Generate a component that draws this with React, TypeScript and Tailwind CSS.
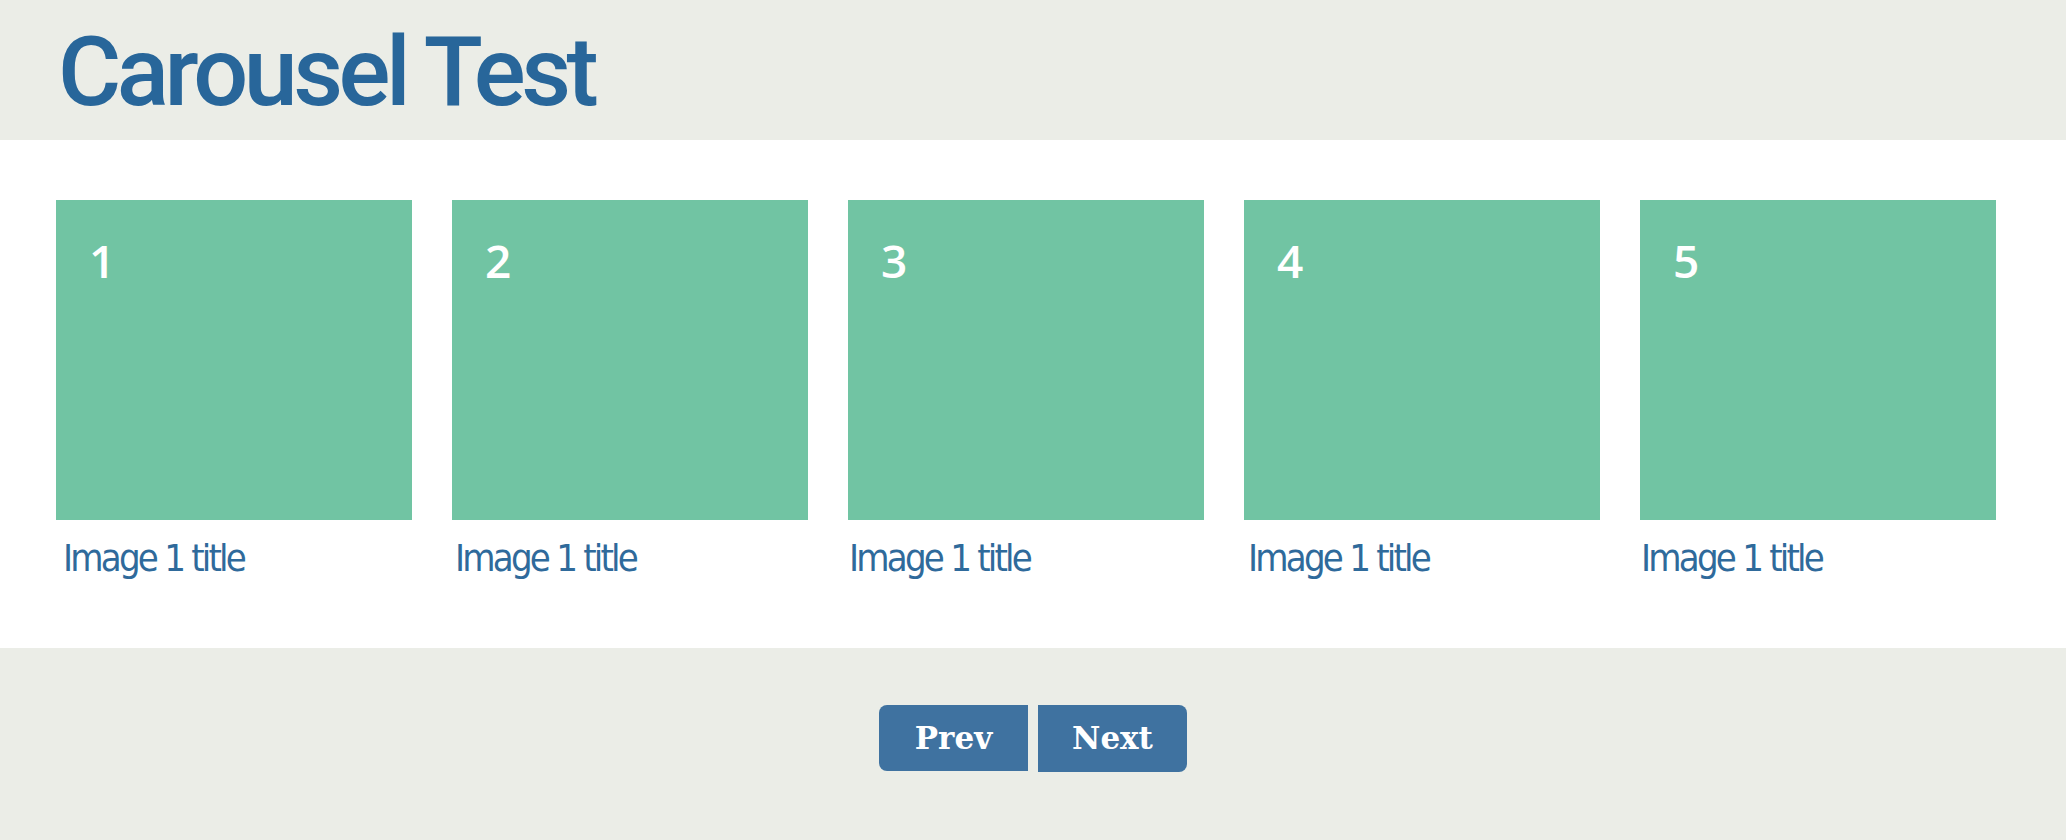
import React from "react";

const cards = [
  { n: "1", capOffset: "ml-[7px]" },
  { n: "2", capOffset: "ml-[3px]" },
  { n: "3", capOffset: "ml-[1px]" },
  { n: "4", capOffset: "ml-[4px]" },
  { n: "5", capOffset: "ml-[1px]" },
];

export default function App() {
  return (
    <div className="w-[2066px] h-[840px] overflow-hidden bg-[#ebede7]">
      <header className="h-[140px] bg-[#ebede7] flex items-center pl-[58px] pt-[4px]">
        <h1 className="text-[#28669a] text-[97px] leading-none font-medium tracking-[-4.5px] [font-family:Roboto,sans-serif]">
          Carousel Test
        </h1>
      </header>
      <main className="h-[508px] bg-white pt-[60px] pl-[56px] overflow-hidden">
        <div className="flex gap-[40px]">
          {cards.map((c) => (
            <div key={c.n} className="w-[356px] shrink-0">
              <div className="h-[320px] bg-[#71c4a3] pl-[33px] pt-[37px]">
                <span className="text-white text-[46px] leading-none font-semibold [font-family:'Open_Sans',sans-serif]">
                  {c.n}
                </span>
              </div>
              <div
                className={`${c.capOffset} mt-[19px] text-[#2f6a9b] text-[38px] leading-none tracking-[-2.8px] [font-family:'DejaVu_Sans_Condensed','DejaVu_Sans',sans-serif]`}
              >
                Image 1 title
              </div>
            </div>
          ))}
        </div>
      </main>
      <footer className="h-[192px] flex justify-center pt-[57px] gap-[10px]">
        <button className="w-[149px] h-[66px] bg-[#3f72a0] text-white rounded-l-[8px] text-[31px] font-bold [font-family:'DejaVu_Serif',serif]">
          Prev
        </button>
        <button className="w-[149px] h-[67px] bg-[#3f72a0] text-white rounded-r-[8px] text-[31px] font-bold [font-family:'DejaVu_Serif',serif]">
          Next
        </button>
      </footer>
    </div>
  );
}
